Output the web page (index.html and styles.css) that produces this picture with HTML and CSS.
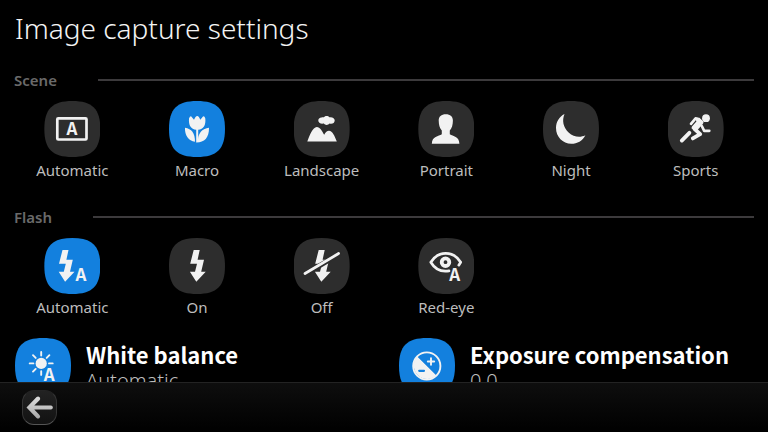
FILE: index.html
```
<!DOCTYPE html>
<html lang="en">
<head>
    <meta charset="UTF-8">
    <meta name="viewport" content="width=device-width, initial-scale=1.0">
    <title>Image capture settings</title>
    <link rel="stylesheet" href="styles.css">
</head>
<body>
    <main class="settings">
        <h1>Image capture settings</h1>

        <section class="group" role="radiogroup" aria-labelledby="scene-title">
            <h2 id="scene-title">Scene</h2>
            <div class="options">
                <label class="option">
                    <span class="tile">
                        <input type="radio" name="scene" value="automatic">
                        <svg viewBox="0 0 56 56">
                            <rect class="line" x="13.3" y="17.3" width="29.2" height="21.2" rx="1"/>
                            <text x="27.9" y="34.3">A</text>
                        </svg>
                    </span>
                    Automatic
                </label>
                <label class="option">
                    <span class="tile">
                        <input type="radio" name="scene" value="macro" checked>
                        <svg viewBox="0 0 56 56">
                            <path d="M20 17.5Q21 15 22.3 15.4L25 18.8Q26.5 15 28.2 15Q30 15 31.3 18.8L34 15.4Q35.6 15 36.3 17.5C37 24 34.5 28.6 29.2 28.8V38C29.5 31.5 33.5 27.8 40 26.7C40.2 37 35 41.6 27.2 41.4V28.8C22 28.6 19.4 24 20 17.5Z"/>
                            <path d="M16 26.7C22.5 28 26 31.5 26 40.8C19.5 39.8 15.6 34.5 16 26.7Z"/>
                        </svg>
                    </span>
                    Macro
                </label>
                <label class="option">
                    <span class="tile">
                        <input type="radio" name="scene" value="landscape">
                        <svg viewBox="0 0 56 56">
                            <path d="M13.3 40.5C15.5 34.5 18.8 26 22.8 26C26 26 28.2 30.3 30.2 33.8C31.6 31.2 33 29.7 35 29.7C38.5 29.7 40.8 35.2 42.8 40.5Z"/>
                            <path d="M27.5 16.6C28.6 16 29.4 16.3 30 16.3C31 14.7 34.3 14.7 35.4 16.3C38.5 15.8 40.7 17.4 40.7 19.5C40.7 21.9 38.5 23.3 35.6 22.6C34.2 24.4 31 24.4 29.8 22.6C26.6 23.2 24.3 21.8 24.3 19.5C24.3 18 25.5 16.8 27.5 16.6Z"/>
                        </svg>
                    </span>
                    Landscape
                </label>
                <label class="option">
                    <span class="tile">
                        <input type="radio" name="scene" value="portrait">
                        <svg viewBox="0 0 56 56">
                            <path d="M27.8 13.2C32.3 13.2 35 15.6 34.9 19.5C34.8 24 34 27 31.8 29.5V33.2C35 35.3 41.2 35 41.4 42.7H13.8C14 35 20.6 35.3 23.8 33.2V29.5C21.6 27 20.8 24 20.7 19.5C20.6 15.6 23.3 13.2 27.8 13.2Z"/>
                        </svg>
                    </span>
                    Portrait
                </label>
                <label class="option">
                    <span class="tile">
                        <input type="radio" name="scene" value="night">
                        <svg viewBox="0 0 56 56">
                            <path d="M21.5 13C16.3 15.6 13 20.9 13 27C13 35.8 19.8 42.8 28.3 42.8C34.3 42.8 39.5 39.8 42.4 34.2C37 36.8 30.6 36 25.6 31.4C20.2 26.4 18.8 19.5 21.5 13Z"/>
                        </svg>
                    </span>
                    Night
                </label>
                <label class="option">
                    <span class="tile">
                        <input type="radio" name="scene" value="sports">
                        <svg viewBox="0 0 56 56">
                            <circle cx="38" cy="17.2" r="3.9"/>
                            <path class="line" d="M23 22.8L27.6 17.4L30.8 18.6M33.8 25L36.2 29.8H41.3"/>
                            <path d="M27 16.2L31.4 16.8L35.4 20.6Q35.8 22 34.8 23L28.6 30L23.6 27.4Q23.4 26 24.4 25L28.4 20.4Z"/>
                            <path class="line thick" d="M26.4 27.8L32.2 33.2L24.8 37.4"/>
                            <path class="line thick" d="M21.4 31.8L13.8 39.6"/>
                        </svg>
                    </span>
                    Sports
                </label>
            </div>
        </section>

        <section class="group" role="radiogroup" aria-labelledby="flash-title">
            <h2 id="flash-title">Flash</h2>
            <div class="options">
                <label class="option">
                    <span class="tile">
                        <input type="radio" name="flash" value="automatic" checked>
                        <svg viewBox="0 0 56 56">
                            <path d="M18.5 12H24.5L22.4 21.7H28.8L26 33.7H30.5L21.1 43.8L14.7 33.7H19.8L21.8 25.7H15Z"/>
                            <text x="37" y="42.5">A</text>
                        </svg>
                    </span>
                    Automatic
                </label>
                <label class="option">
                    <span class="tile">
                        <input type="radio" name="flash" value="on">
                        <svg viewBox="0 0 56 56">
                            <path d="M24.7 12H30.7L28.6 21.7H35L32.2 33.7H36.7L27.3 43.8L20.9 33.7H26L28 25.7H21.2Z"/>
                        </svg>
                    </span>
                    On
                </label>
                <label class="option">
                    <span class="tile">
                        <input type="radio" name="flash" value="off">
                        <svg viewBox="0 0 56 56">
                            <path d="M24.7 12H30.7L28.6 21.7H35L32.2 33.7H36.7L27.3 43.8L20.9 33.7H26L28 25.7H21.2Z"/>
                            <path class="gap" d="M10.5 36.6L45 16.1"/>
                            <path class="line" d="M11 35.5L44.6 15.5"/>
                        </svg>
                    </span>
                    Off
                </label>
                <label class="option">
                    <span class="tile">
                        <input type="radio" name="flash" value="red-eye">
                        <svg viewBox="0 0 56 56">
                            <path class="line" d="M31 32.9C23.5 34.2 17 31.3 12.8 24.3C20 12.4 35.5 12.4 42.7 24.3L40.8 27.2"/>
                            <circle class="line thick" cx="27.5" cy="24.2" r="3.8"/>
                            <text x="36.8" y="42.6">A</text>
                        </svg>
                    </span>
                    Red-eye
                </label>
            </div>
        </section>

        <div class="rows">
            <button type="button" class="row">
                <span class="tile active">
                    <svg viewBox="0 0 56 56">
                        <circle cx="26.2" cy="25.4" r="5.6"/>
                        <path class="ray" d="M26.2 17.6V13.9M26.2 33.2V36.9M18.4 25.4H14.7M34 25.4H37.7M20.7 19.9L18 17.2M31.7 19.9L34.4 17.2M20.7 30.9L18 33.6"/>
                        <text x="34.2" y="42.5">A</text>
                    </svg>
                </span>
                <span class="row-text">
                    <span class="row-title">White balance</span>
                    <span class="row-value">Automatic</span>
                </span>
            </button>
            <button type="button" class="row">
                <span class="tile active">
                    <svg viewBox="0 0 56 56">
                        <circle class="ray" cx="27.8" cy="28" r="13.6"/>
                        <path d="M18.2 18.4A13.6 13.6 0 0 0 37.4 37.6Z"/>
                        <path class="ray" d="M28.8 23.5H35.2M32 20.3V26.7"/>
                        <path class="minus" d="M20.2 32.8H25"/>
                    </svg>
                </span>
                <span class="row-text">
                    <span class="row-title">Exposure compensation</span>
                    <span class="row-value">0.0</span>
                </span>
            </button>
        </div>
    </main>

    <footer class="toolbar">
        <button type="button" class="back" aria-label="Back">
            <svg viewBox="0 0 34 34">
                <defs>
                    <linearGradient id="silver" x1="0" y1="0" x2="0" y2="1">
                        <stop offset="0" stop-color="#dedede"/>
                        <stop offset="1" stop-color="#a8a8a8"/>
                    </linearGradient>
                </defs>
                <path fill="url(#silver)" d="M3.6 17L14 6.2Q15.6 5 17.2 6.4Q18.4 8.2 17 9.6L11.6 15H29Q30.8 15.3 30.8 17Q30.8 18.8 29 19H11.6L17 24.6Q18.4 26.2 17 27.8Q15.4 29 14 27.8Z"/>
            </svg>
        </button>
    </footer>
</body>
</html>
```
FILE: styles.css
```
* {
    box-sizing: border-box;
}

body {
    margin: 0;
    height: 100vh;
    display: flex;
    flex-direction: column;
    overflow: hidden;
    background: #000;
    color: #fff;
    font-family: "Noto Sans", "Open Sans", sans-serif;
}

.settings {
    flex: 1;
    min-height: 0;
    overflow: hidden;
}

h1 {
    margin: 0;
    padding: 6px 15px 21px;
    font-size: 28px;
    font-weight: 300;
    line-height: 44px;
    color: #f4f4f4;
}

.group {
    margin-bottom: 21px;
}

.group + .group {
    margin-top: 28px;
}

.group h2 {
    display: flex;
    align-items: center;
    gap: 41px;
    margin: 0 14px 12px;
    font-size: 15px;
    font-weight: 600;
    line-height: 18px;
    color: #6a6a6a;
}

/* Rule to the right of the group name */
.group h2::after {
    content: "";
    flex: 1;
    height: 2px;
    background: #3c3a3c;
}

.options {
    display: grid;
    grid-template-columns: repeat(6, 1fr);
    padding: 0 10px;
}

.option {
    display: flex;
    flex-direction: column;
    align-items: center;
    gap: 3px;
    font-size: 15px;
    line-height: 20px;
    color: #bdbdbd;
    cursor: pointer;
}

.tile {
    display: grid;
    flex: none;
    width: 56px;
    height: 56px;
    /* Rounded square */
    clip-path: path("M28 0C48 0 56 8 56 28C56 48 48 56 28 56C8 56 0 48 0 28C0 8 8 0 28 0Z");
}

.tile.active {
    background: #1380de;
}

.tile input {
    grid-area: 1 / 1;
    appearance: none;
    width: 56px;
    height: 56px;
    margin: 0;
    background: #2d2d2d;
    cursor: pointer;
}

.tile input:checked {
    background: #1380de;
}

.tile svg {
    grid-area: 1 / 1;
    width: 56px;
    height: 56px;
    fill: #f2f2f2;
    pointer-events: none;
}

.tile text {
    font-family: "Noto Sans CJK SC", "Noto Sans", sans-serif;
    font-size: 17px;
    font-weight: 700;
    text-anchor: middle;
}

.tile .line,
.tile .ray,
.tile .gap,
.tile .minus {
    fill: none;
    stroke: #f2f2f2;
    stroke-width: 2.7;
    stroke-linecap: round;
    stroke-linejoin: round;
}

.tile .thick {
    stroke-width: 3.8;
}

.tile .ray {
    stroke-width: 1.9;
}

.tile .gap {
    stroke: #2d2d2d;
    stroke-width: 5;
}

.tile .minus {
    stroke: #1380de;
    stroke-width: 2.2;
}

.rows {
    display: grid;
    grid-template-columns: 1fr 1fr;
}

.row {
    display: flex;
    gap: 15px;
    padding: 0 0 0 15px;
    border: 0;
    background: none;
    color: inherit;
    font-family: inherit;
    text-align: left;
    cursor: pointer;
}

.row-text {
    display: flex;
    flex-direction: column;
    padding-top: 2px;
}

.row-title {
    font-family: "Noto Sans CJK SC", "Noto Sans", sans-serif;
    font-size: 22px;
    font-weight: 700;
    line-height: 28px;
}

.row-value {
    font-size: 20px;
    font-weight: 300;
    line-height: 26px;
    color: #bdbdbd;
}

.toolbar {
    flex: none;
    display: flex;
    align-items: center;
    height: 50px;
    padding: 0 22px;
    border-top: 1px solid #232323;
    background: linear-gradient(#0e0e0e, #000);
}

.back {
    width: 35px;
    height: 35px;
    padding: 0;
    border: 1px solid #353535;
    border-top-color: #242424;
    border-bottom-color: #555;
    border-radius: 12px;
    background: linear-gradient(#222, #121212);
    cursor: pointer;
}

.back svg {
    display: block;
    width: 100%;
}
```
